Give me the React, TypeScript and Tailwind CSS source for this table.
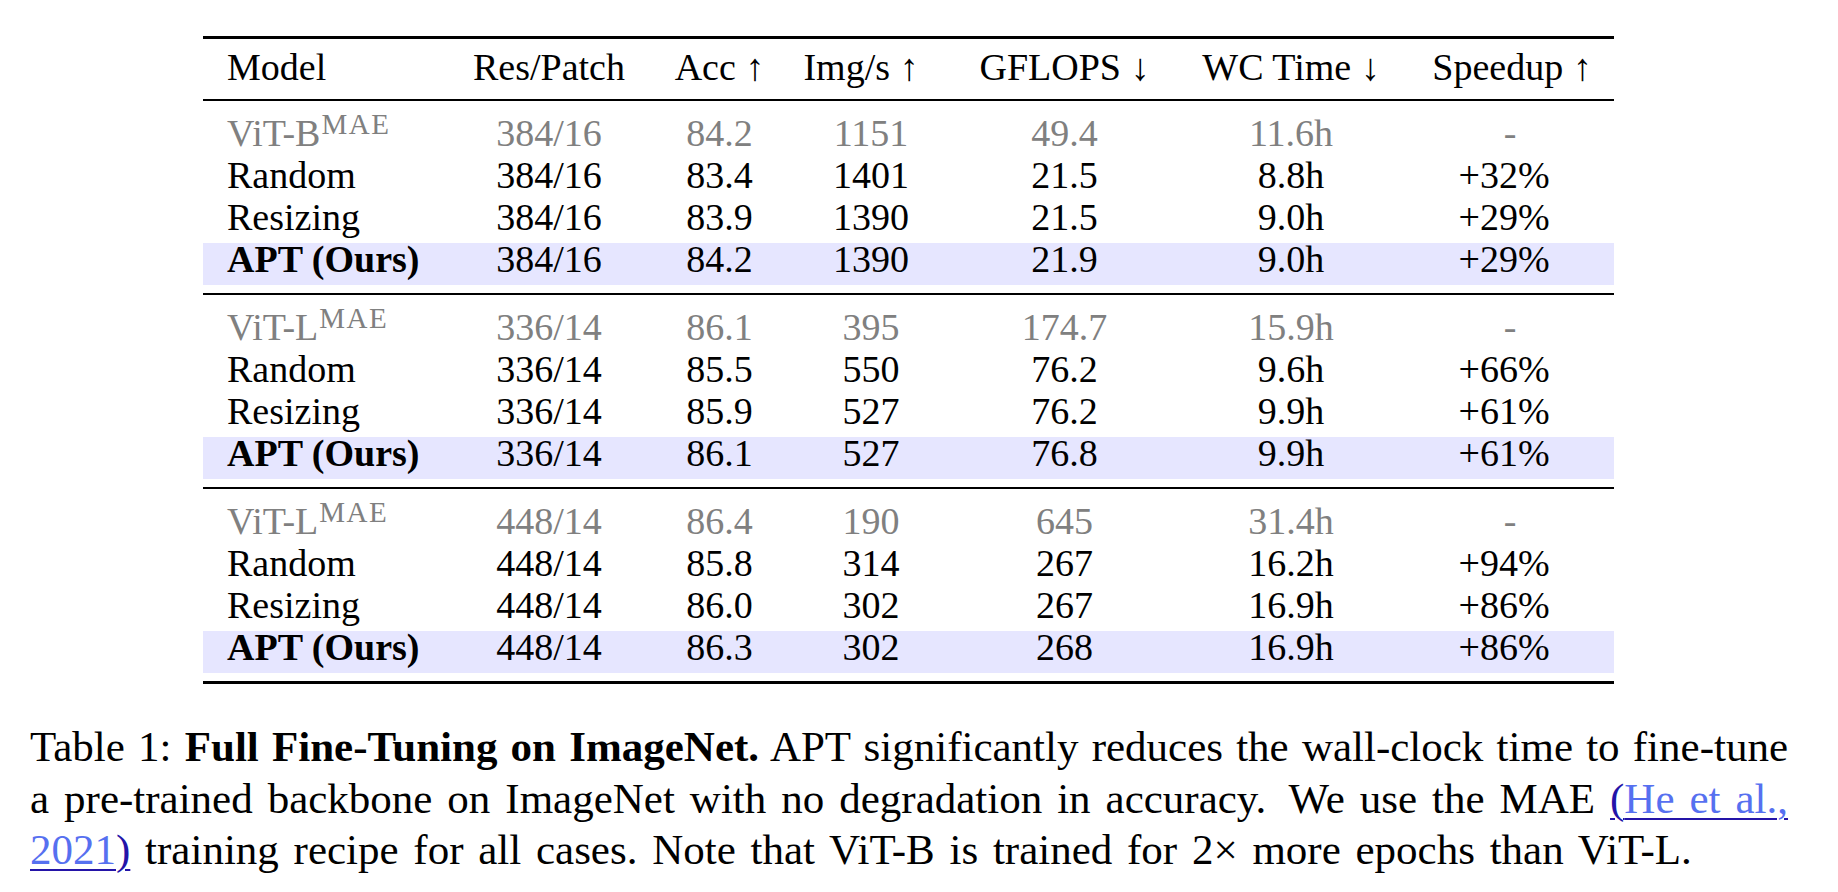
import React from "react";

type Row = {
  model: string;
  sup?: string;
  gray?: boolean;
  bold?: boolean;
  hl?: boolean;
  vals: string[];
};

const sections: Row[][] = [
  [
    { model: "ViT-B", sup: "MAE", gray: true, vals: ["384/16", "84.2", "1151", "49.4", "11.6h", "-"] },
    { model: "Random", vals: ["384/16", "83.4", "1401", "21.5", "8.8h", "+32%"] },
    { model: "Resizing", vals: ["384/16", "83.9", "1390", "21.5", "9.0h", "+29%"] },
    { model: "APT (Ours)", bold: true, hl: true, vals: ["384/16", "84.2", "1390", "21.9", "9.0h", "+29%"] },
  ],
  [
    { model: "ViT-L", sup: "MAE", gray: true, vals: ["336/14", "86.1", "395", "174.7", "15.9h", "-"] },
    { model: "Random", vals: ["336/14", "85.5", "550", "76.2", "9.6h", "+66%"] },
    { model: "Resizing", vals: ["336/14", "85.9", "527", "76.2", "9.9h", "+61%"] },
    { model: "APT (Ours)", bold: true, hl: true, vals: ["336/14", "86.1", "527", "76.8", "9.9h", "+61%"] },
  ],
  [
    { model: "ViT-L", sup: "MAE", gray: true, vals: ["448/14", "86.4", "190", "645", "31.4h", "-"] },
    { model: "Random", vals: ["448/14", "85.8", "314", "267", "16.2h", "+94%"] },
    { model: "Resizing", vals: ["448/14", "86.0", "302", "267", "16.9h", "+86%"] },
    { model: "APT (Ours)", bold: true, hl: true, vals: ["448/14", "86.3", "302", "268", "16.9h", "+86%"] },
  ],
];

const grid = "grid grid-cols-[257px_178px_163px_140px_247px_206px_220px] items-start";

function DataRow({ r }: { r: Row }) {
  return (
    <div className={`${grid} h-[42px] leading-[32px] ${r.hl ? "bg-[#e6e6ff]" : ""} ${r.gray ? "text-[#808080]" : "text-black"}`}>
      <div className={`pl-[24px] whitespace-nowrap ${r.bold ? "font-bold" : ""}`}>
        {r.model}
        {r.sup && (
          <span className="relative -top-[12px] text-[29px] tracking-[1.5px] ml-[1px]">{r.sup}</span>
        )}
      </div>
      {r.vals.map((v, i) => (
        <div
          key={i}
          className={`text-center whitespace-nowrap ${i === 5 && v === "-" ? "pl-[12px]" : ""}`}
        >
          {v}
        </div>
      ))}
    </div>
  );
}

export default function App() {
  return (
    <div className="w-[1838px] h-[892px] bg-white overflow-hidden font-['Liberation_Serif',serif] text-black">
      <div className="ml-[203px] w-[1411px] pt-[36px] text-[38px]">
        <div className="h-[3px] bg-black" />
        <div className={`${grid} pt-[7px] pb-[11px] leading-[42px]`}>
          <div className="pl-[24px]">Model</div>
          <div className="text-center whitespace-nowrap">Res/Patch</div>
          <div className="text-center whitespace-nowrap">Acc ↑</div>
          <div className="text-center whitespace-nowrap pr-[20px]">Img/s ↑</div>
          <div className="text-center whitespace-nowrap">GFLOPS ↓</div>
          <div className="text-center whitespace-nowrap">WC Time ↓</div>
          <div className="text-center whitespace-nowrap pl-[16px]">Speedup ↑</div>
        </div>
        {sections.map((sec, si) => (
          <div key={si}>
            <div className="h-[2px] bg-black" />
            <div className="pt-[16px] pb-[8px]">
              {sec.map((r, ri) => (
                <DataRow key={ri} r={r} />
              ))}
            </div>
          </div>
        ))}
        <div className="h-[3px] bg-black" />
      </div>

      <div className="ml-[30px] w-[1758px] mt-[37px] text-[43px] leading-[51.6px]">
        <div className="text-justify [text-align-last:justify] whitespace-nowrap">
          Table 1: <span className="font-bold">Full Fine-Tuning on ImageNet.</span> APT significantly reduces the wall-clock time to fine-tune
        </div>
        <div className="text-justify [text-align-last:justify] whitespace-nowrap">
          a pre-trained backbone on ImageNet with no degradation in accuracy.<span className="inline-block w-[8px]" /> We use the MAE{" "}
          <span className="underline decoration-[#2414a8] decoration-2 underline-offset-[5px]">
            <span className="text-[#2414a8]">(</span>
            <span className="text-[#5670f0]">He et al.,</span>
          </span>
        </div>
        <div className="text-left whitespace-nowrap [word-spacing:4px]">
          <span className="underline decoration-[#2414a8] decoration-2 underline-offset-[5px]">
            <span className="text-[#5670f0]">2021</span>
            <span className="text-[#2414a8]">)</span>
          </span>{" "}
          training recipe for all cases. Note that ViT-B is trained for 2× more epochs than ViT-L.
        </div>
      </div>
    </div>
  );
}
